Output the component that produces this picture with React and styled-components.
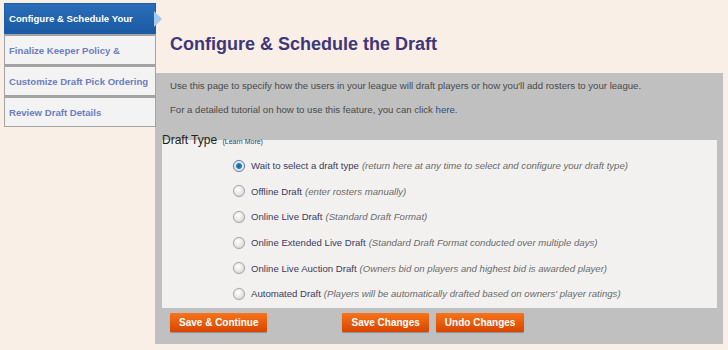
import React, { useState } from "react";
import styled, { createGlobalStyle } from "styled-components";

const GlobalStyle = createGlobalStyle`
  html, body {
    margin: 0;
    padding: 0;
    background: #faefe6;
    font-family: "Liberation Sans", Arial, sans-serif;
  }
`;

const Page = styled.div`
  display: flex;
  width: 728px;
  height: 350px;
  background: #faefe6;
`;

const Sidebar = styled.div`
  width: 152px;
  margin: 3px 0 0 4px;
  display: flex;
  flex-direction: column;
`;

const Tab = styled.div`
  position: relative;
  box-sizing: border-box;
  height: 31px;
  display: flex;
  align-items: center;
  padding: 0 4px;
  font-size: 9.6px;
  font-weight: bold;
  white-space: nowrap;
  border: 1px solid ${(p) => (p.$active ? "#1d5ca6" : "#a3a3a3")};
  border-top-width: ${(p) => (p.$first ? "1px" : "0")};
  background: ${(p) => (p.$active ? "linear-gradient(#2a6db8, #1b5aa3)" : "#f3f3f3")};
  color: ${(p) => (p.$active ? "#ffffff" : "#6c7ec0")};
  & + & {
    border-top: 2px solid #a3a3a3;
  }
`;

const Arrow = styled.span`
  position: absolute;
  right: -7px;
  top: 7px;
  width: 0;
  height: 0;
  border-top: 8px solid transparent;
  border-bottom: 8px solid transparent;
  border-left: 8px solid #a6cbf0;
`;

const Main = styled.div`
  flex: 1;
  margin-left: -1px;
  margin-right: 5px;
  display: flex;
  flex-direction: column;
`;

const Header = styled.div`
  height: 73px;
  display: flex;
  align-items: center;
  padding: 0 15px;
  box-sizing: border-box;
  padding-top: 15px;
`;

const Heading = styled.h1`
  margin: 0;
  font-size: 18px;
  font-weight: bold;
  color: #3e3779;
`;

const Panel = styled.div`
  background: #c0c0c0;
  height: 271px;
  padding: 0 6px 0 7px;
  display: flex;
  flex-direction: column;
`;

const IntroBlock = styled.div`
  padding-top: 1px;
  height: 59px;
`;

const Intro = styled.p`
  margin: 0;
  padding-left: 8px;
  font-size: 9.6px;
  line-height: 24px;
  color: #4a4a4a;
`;

const Link = styled.a`
  color: #2a4f8f;
  text-decoration: none;
`;

const Fieldset = styled.fieldset`
  margin: 0;
  padding: 6px 0 1px 0;
  border: none;
  background: #f2f1ef;
  min-width: 0;
`;

const Legend = styled.legend`
  padding: 0;
  margin-left: 0;
  font-size: 12px;
  color: #222;
`;

const Small = styled.a`
  font-size: 7px;
  color: #2a3f7a;
  text-decoration: none;
  margin-left: 2px;
`;

const Option = styled.label`
  display: flex;
  align-items: center;
  height: 25.6px;
  padding-left: 71px;
  font-size: 9.6px;
  color: #3c3a5c;
  cursor: pointer;
`;

const Radio = styled.input.attrs({ type: "radio" })`
  appearance: none;
  margin: 0 6px 0 0;
  width: 12px;
  height: 12px;
  border-radius: 50%;
  border: 1px solid #a8a8a8;
  box-sizing: border-box;
  background: radial-gradient(circle at 40% 35%, #ffffff 0%, #e6e6e6 55%, #c9c9c9 100%);
  box-shadow: 0 0 1px rgba(0, 0, 0, 0.2);
  &:checked {
    border-color: #5a7fa8;
    background: radial-gradient(circle, #1b5f96 0, #2f7fb8 2.5px, #dfe9f2 3.5px, #f6f6f6 100%);
  }
`;

const Note = styled.em`
  color: #6a6a6a;
  margin-left: 3px;
`;

const ButtonRow = styled.div`
  display: flex;
  align-items: center;
  padding: 5px 0 0 8px;
`;

const Button = styled.button`
  height: 19px;
  padding: 0 9px;
  margin-left: ${(p) => p.$gap || 0}px;
  border: none;
  border-radius: 1px;
  background: linear-gradient(#f6741a, #d84500);
  box-shadow: 0 1px 1px rgba(0, 0, 0, 0.25);
  color: #fff;
  font-family: "Liberation Sans", Arial, sans-serif;
  font-size: 10px;
  font-weight: bold;
  cursor: pointer;
`;

const tabs = [
  "Configure & Schedule Your",
  "Finalize Keeper Policy &",
  "Customize Draft Pick Ordering",
  "Review Draft Details",
];

const options = [
  ["Wait to select a draft type", "(return here at any time to select and configure your draft type)"],
  ["Offline Draft", "(enter rosters manually)"],
  ["Online Live Draft", "(Standard Draft Format)"],
  ["Online Extended Live Draft", "(Standard Draft Format conducted over multiple days)"],
  ["Online Live Auction Draft", "(Owners bid on players and highest bid is awarded player)"],
  ["Automated Draft", "(Players will be automatically drafted based on owners' player ratings)"],
];

export default function App() {
  const [selected, setSelected] = useState(0);

  return (
    <Page>
      <GlobalStyle />
      <Sidebar>
        {tabs.map((t, i) => (
          <Tab key={t} $active={i === 0} $first={i === 0}>
            {t}
            {i === 0 && <Arrow />}
          </Tab>
        ))}
      </Sidebar>
      <Main>
        <Header>
          <Heading>Configure &amp; Schedule the Draft</Heading>
        </Header>
        <Panel>
          <IntroBlock>
            <Intro>
              Use this page to specify how the users in your league will draft players or how you'll add rosters to your league.
            </Intro>
            <Intro>
              For a detailed tutorial on how to use this feature, you can click <Link href="#">here</Link>.
            </Intro>
          </IntroBlock>
          <Fieldset>
            <Legend>
              Draft Type <Small href="#">(Learn More)</Small>
            </Legend>
            {options.map(([label, note], i) => (
              <Option key={label}>
                <Radio
                  name="draftType"
                  checked={selected === i}
                  onChange={() => setSelected(i)}
                />
                {label}
                <Note>{note}</Note>
              </Option>
            ))}
          </Fieldset>
          <ButtonRow>
            <Button>Save &amp; Continue</Button>
            <Button $gap={75}>Save Changes</Button>
            <Button $gap={7}>Undo Changes</Button>
          </ButtonRow>
        </Panel>
      </Main>
    </Page>
  );
}
